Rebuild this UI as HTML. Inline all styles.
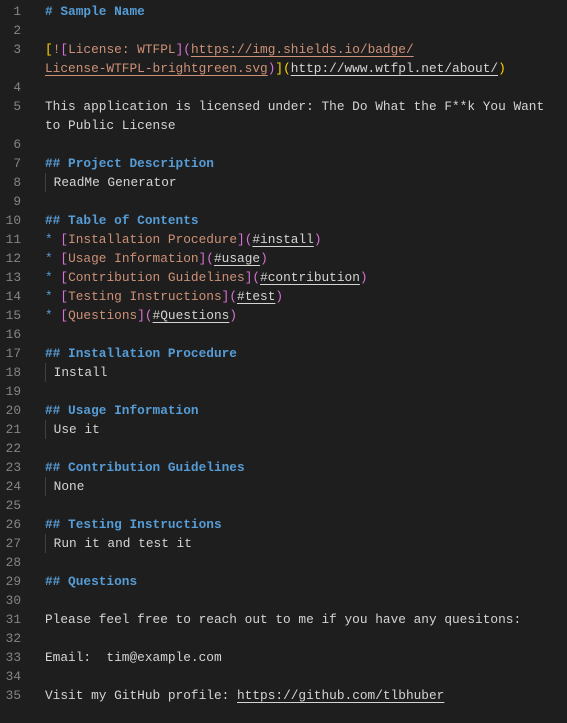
<!DOCTYPE html>
<html><head><meta charset="utf-8"><style>
html,body{margin:0;padding:0;background:#1e1e1e;width:567px;height:723px;overflow:hidden}
body{font-family:"Liberation Mono",monospace;font-size:12.8px;color:#d4d4d4}
.r{position:relative;height:19px;line-height:19px;white-space:pre}
.n{position:absolute;left:0;width:21px;text-align:right;color:#858585}
.t{position:absolute;left:45px}
.h{color:#569cd6;font-weight:bold}
.st{color:#569cd6}
.s{color:#ce9178}
.y{color:#ffd700}
.p{color:#da70d6}
.u{text-decoration:underline;text-underline-offset:3px}
.g{border-left:1px solid #404040}
#wrap{padding-top:2px}
</style></head><body><div id="wrap">
<div class="r"><span class="n">1</span><span class="t h"># Sample Name</span></div>
<div class="r"><span class="n">2</span></div>
<div class="r"><span class="n">3</span><span class="t"><span class="y">[</span><span class="s">!</span><span class="p">[</span><span class="s">License: WTFPL</span><span class="p">](</span><span class="s u">https://img.shields.io/badge/</span></span></div>
<div class="r"><span class="t"><span class="s u">License-WTFPL-brightgreen.svg</span><span class="p">)</span><span class="y">](</span><span class="u">http://www.wtfpl.net/about/</span><span class="y">)</span></span></div>
<div class="r"><span class="n">4</span></div>
<div class="r"><span class="n">5</span><span class="t">This application is licensed under: The Do What the F**k You Want</span></div>
<div class="r"><span class="t">to Public License</span></div>
<div class="r"><span class="n">6</span></div>
<div class="r"><span class="n">7</span><span class="t h">## Project Description</span></div>
<div class="r"><span class="n">8</span><span class="t g"> ReadMe Generator</span></div>
<div class="r"><span class="n">9</span></div>
<div class="r"><span class="n">10</span><span class="t h">## Table of Contents</span></div>
<div class="r"><span class="n">11</span><span class="t"><span class="st">*</span> <span class="p">[</span><span class="s">Installation Procedure</span><span class="p">](</span><span class="u">#install</span><span class="p">)</span></span></div>
<div class="r"><span class="n">12</span><span class="t"><span class="st">*</span> <span class="p">[</span><span class="s">Usage Information</span><span class="p">](</span><span class="u">#usage</span><span class="p">)</span></span></div>
<div class="r"><span class="n">13</span><span class="t"><span class="st">*</span> <span class="p">[</span><span class="s">Contribution Guidelines</span><span class="p">](</span><span class="u">#contribution</span><span class="p">)</span></span></div>
<div class="r"><span class="n">14</span><span class="t"><span class="st">*</span> <span class="p">[</span><span class="s">Testing Instructions</span><span class="p">](</span><span class="u">#test</span><span class="p">)</span></span></div>
<div class="r"><span class="n">15</span><span class="t"><span class="st">*</span> <span class="p">[</span><span class="s">Questions</span><span class="p">](</span><span class="u">#Questions</span><span class="p">)</span></span></div>
<div class="r"><span class="n">16</span></div>
<div class="r"><span class="n">17</span><span class="t h">## Installation Procedure</span></div>
<div class="r"><span class="n">18</span><span class="t g"> Install</span></div>
<div class="r"><span class="n">19</span></div>
<div class="r"><span class="n">20</span><span class="t h">## Usage Information</span></div>
<div class="r"><span class="n">21</span><span class="t g"> Use it</span></div>
<div class="r"><span class="n">22</span></div>
<div class="r"><span class="n">23</span><span class="t h">## Contribution Guidelines</span></div>
<div class="r"><span class="n">24</span><span class="t g"> None</span></div>
<div class="r"><span class="n">25</span></div>
<div class="r"><span class="n">26</span><span class="t h">## Testing Instructions</span></div>
<div class="r"><span class="n">27</span><span class="t g"> Run it and test it</span></div>
<div class="r"><span class="n">28</span></div>
<div class="r"><span class="n">29</span><span class="t h">## Questions</span></div>
<div class="r"><span class="n">30</span></div>
<div class="r"><span class="n">31</span><span class="t">Please feel free to reach out to me if you have any quesitons:</span></div>
<div class="r"><span class="n">32</span></div>
<div class="r"><span class="n">33</span><span class="t">Email:  tim@example.com</span></div>
<div class="r"><span class="n">34</span></div>
<div class="r"><span class="n">35</span><span class="t">Visit my GitHub profile: <span class="u">https://github.com/tlbhuber</span></span></div>
</div></body></html>
